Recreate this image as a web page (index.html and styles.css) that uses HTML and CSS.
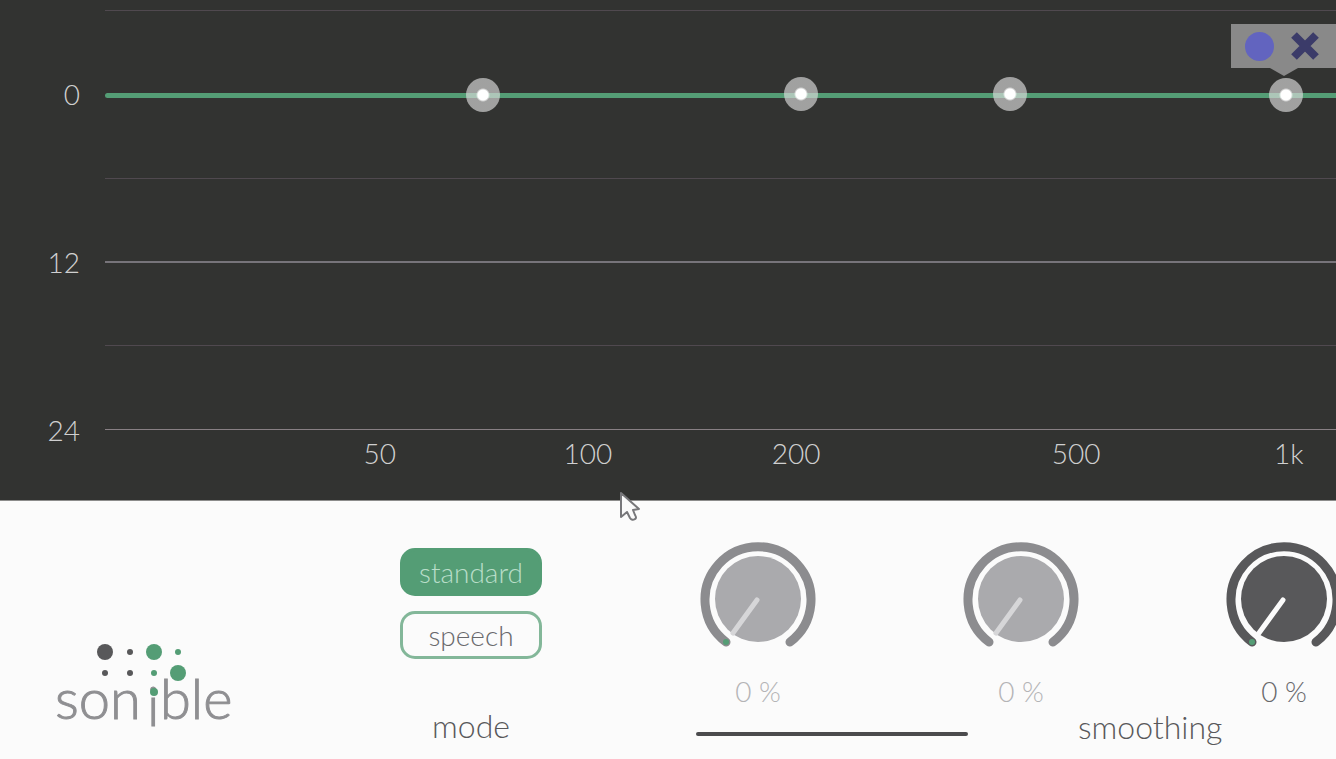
FILE: index.html
```html
<!DOCTYPE html>
<html lang="en">
<head>
<meta charset="utf-8">
<meta name="viewport" content="width=device-width, initial-scale=1">
<title>sonible equalizer</title>
<link rel="stylesheet" href="styles.css">
</head>
<body>
<main class="plugin">
  <section class="chart" aria-label="Equalizer curve">
    <div class="gain-axis">
      <span>0</span>
      <span>12</span>
      <span>24</span>
    </div>
    <div class="plot">
      <div class="grid">
        <div class="line minor"></div>
        <div class="line zero"></div>
        <div class="line minor"></div>
        <div class="line major"></div>
        <div class="line minor"></div>
        <div class="line base"></div>
        <button class="node" type="button" aria-label="Band 1" style="left:30.7%"></button>
        <button class="node raised" type="button" aria-label="Band 2" style="left:56.5%"></button>
        <button class="node raised" type="button" aria-label="Band 3" style="left:73.5%"></button>
        <button class="node" type="button" aria-label="Band 4" style="left:95.9%"></button>
        <div class="popup">
          <button class="popup-button" type="button" aria-label="Band colour"><span class="swatch"></span></button>
          <button class="popup-button" type="button" aria-label="Remove band">
            <svg width="30" height="30" viewBox="0 0 30 30"><path d="M4 4 26 26M26 4 4 26" stroke="#3b3b69" stroke-width="8" fill="none"/></svg>
          </button>
        </div>
      </div>
      <div class="frequency-axis">
        <span>50</span>
        <span>100</span>
        <span>200</span>
        <span>500</span>
        <span>1k</span>
      </div>
    </div>
  </section>

  <section class="controls">
    <svg class="logo" width="190" height="110" viewBox="0 0 190 110" role="img" aria-label="sonible">
      <g fill="#58585a">
        <circle cx="50" cy="14" r="8"/><circle cx="75" cy="14" r="3"/>
        <circle cx="50" cy="35" r="3"/><circle cx="75" cy="35" r="3"/>
      </g>
      <text class="wordmark" y="81"><tspan x="0">son</tspan><tspan x="92" y="88">i</tspan><tspan x="105" y="81">ble</tspan></text>
      <g fill="#549d75">
        <circle cx="99" cy="14" r="8"/><circle cx="123" cy="14" r="3"/>
        <circle cx="99" cy="35" r="3"/><circle cx="123" cy="35" r="8"/>
        <circle cx="99" cy="54" r="4"/>
      </g>
    </svg>

    <div class="mode">
      <button class="mode-button selected" type="button" aria-pressed="true">standard</button>
      <button class="mode-button" type="button" aria-pressed="false">speech</button>
      <h2 class="caption">mode</h2>
    </div>

    <div class="smoothing">
      <div class="knobs">
        <label class="knob dim">
          <svg width="116" height="106" viewBox="0 0 116 106">
            <path class="ring" d="M26 101A53 53 0 1 1 90 101"/>
            <circle class="cap" cx="58" cy="58" r="43"/>
            <path class="needle" d="M57 59 33 92"/>
            <circle class="start" cx="26" cy="101" r="3"/>
          </svg>
          <input type="range" min="0" max="100" value="0" aria-label="Low smoothing">
          <output>0 %</output>
        </label>
        <label class="knob dim">
          <svg width="116" height="106" viewBox="0 0 116 106">
            <path class="ring" d="M26 101A53 53 0 1 1 90 101"/>
            <circle class="cap" cx="58" cy="58" r="43"/>
            <path class="needle" d="M57 59 33 92"/>
          </svg>
          <input type="range" min="0" max="100" value="0" aria-label="Mid smoothing">
          <output>0 %</output>
        </label>
        <label class="knob">
          <svg width="116" height="106" viewBox="0 0 116 106">
            <path class="ring" d="M26 101A53 53 0 1 1 90 101"/>
            <circle class="cap" cx="58" cy="58" r="43"/>
            <path class="needle" d="M57 59 33 92"/>
            <circle class="start" cx="26" cy="101" r="3"/>
          </svg>
          <input type="range" min="0" max="100" value="0" aria-label="High smoothing">
          <output>0 %</output>
        </label>
      </div>
      <div class="group-title">
        <span class="rule"></span>
        <h2 class="caption">smoothing</h2>
      </div>
    </div>
  </section>

  <svg class="pointer" width="24" height="32" viewBox="0 0 24 32" aria-hidden="true">
    <path d="M2 2V26L8 21L11 27Q13 30 16 28Q18 27 16 24L14 19L20 18Z" fill="#fafafa" stroke="#77777a" stroke-width="2" stroke-linejoin="round"/>
  </svg>
</main>
</body>
</html>
```
FILE: styles.css
```css
* {
  box-sizing: border-box;
}

body {
  margin: 0;
  background: #fbfbfb;
  color: #68686b;
  font-family: Lato, "Open Sans", sans-serif;
  font-size: 28px;
  font-weight: 300;
  line-height: 32px;
}

button {
  padding: 0;
  border: 0;
  background: none;
  color: inherit;
  font: inherit;
  cursor: pointer;
}

.plugin {
  position: relative;
  min-height: 100vh;
  overflow: hidden;
}

.chart {
  display: flex;
  padding-top: 10px;
  background: #323331;
  border-bottom: 1px solid #8c8c8b;
  color: #d0d0d0;
}

.gain-axis {
  display: flex;
  flex-direction: column;
  gap: 136px;
  width: 105px;
  padding: 68px 25px 0 0;
  text-align: right;
}

.plot {
  flex: 1;
  min-width: 0;
}

.grid {
  position: relative;
}

.line {
  height: 84px;
  border-top: 1px solid #50494f;
}

.line.zero {
  position: relative;
  border-top: 0;
}

.line.zero::before {
  content: "";
  position: absolute;
  inset: -1px 0 auto;
  height: 5px;
  border-radius: 3px 0 0 3px;
  background: #549d75;
}

.line.major {
  margin-top: -1px;
  border-top: 2px solid #77747a;
}

.line.base {
  height: 8px;
  border-top-color: #888084;
}

.node {
  position: absolute;
  top: 85px;
  width: 34px;
  height: 34px;
  margin: -17px 0 0 -17px;
  border-radius: 50%;
  background: radial-gradient(circle, #fff 0 5px, rgba(220, 220, 220, 0.65) 7px);
}

.node.raised {
  top: 84px;
}

.popup {
  position: absolute;
  top: 14px;
  left: 91.5%;
  display: flex;
  align-items: center;
  gap: 16px;
  height: 44px;
  padding: 0 18px 0 14px;
  background: #898989;
}

.popup::after {
  content: "";
  position: absolute;
  top: 44px;
  left: 39px;
  border: 14px solid transparent;
  border-top: 8px solid #898989;
  border-bottom: 0;
}

.popup-button {
  display: flex;
}

.swatch {
  width: 29px;
  height: 29px;
  border-radius: 50%;
  background: #6264bf;
}

.frequency-axis {
  display: grid;
  grid-template-columns: 200fr 208fr 280fr 222fr 62fr;
  padding: 0 0 31px 21%;
}

.controls {
  display: grid;
  grid-template-columns: 338fr 266fr 732fr;
  min-height: 258px;
}

.logo {
  align-self: start;
  margin: 137px 0 0 55px;
}

.wordmark {
  fill: #8f8f92;
  stroke: #8f8f92;
  stroke-width: 1px;
  font-size: 56px;
}

.mode {
  display: flex;
  flex-direction: column;
  align-items: center;
  padding-top: 47px;
}

.mode-button {
  width: 142px;
  height: 48px;
  margin-bottom: 15px;
  border: 3px solid #83b799;
  border-radius: 15px;
}

.mode-button.selected {
  border-color: #549d75;
  background: #549d75;
  color: #b9dec9;
}

.caption {
  margin: 0;
  color: #58585a;
  font-size: 32px;
  font-weight: 300;
  line-height: 40px;
}

.mode .caption {
  margin-top: 32px;
}

.smoothing {
  min-width: 0;
  padding: 40px 0 0 92px;
}

.knobs {
  display: flex;
  gap: 147px;
  padding-left: 4px;
}

.knob {
  position: relative;
  display: flex;
  flex: none;
  flex-direction: column;
  align-items: center;
  gap: 28px;
  width: 116px;
}

.knob input {
  position: absolute;
  inset: 0 0 auto;
  height: 106px;
  margin: 0;
  opacity: 0;
}

.knob.dim output {
  color: #b4b4b6;
}

.ring,
.needle {
  fill: none;
  stroke: #58585a;
  stroke-width: 9px;
  stroke-linecap: round;
}

.cap {
  fill: #58585a;
}

.needle {
  stroke: #fbfbfb;
  stroke-width: 5px;
}

.dim .ring {
  stroke: #8c8c8f;
}

.dim .cap {
  fill: #aaaaad;
}

.dim .needle {
  stroke: #d6d6d8;
}

.start {
  fill: #549d75;
}

.group-title {
  display: flex;
  align-items: center;
  gap: 110px;
}

.rule {
  width: 272px;
  height: 4px;
  margin-top: 14px;
  border-radius: 2px;
  background: #4b4b4d;
}

.pointer {
  position: absolute;
  top: 491px;
  left: 619px;
}
```
